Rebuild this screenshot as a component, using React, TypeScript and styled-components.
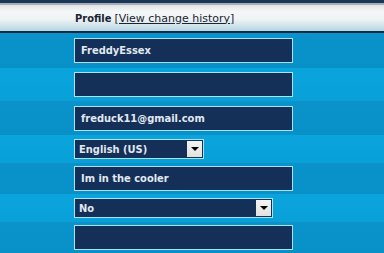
import React from "react";
import styled, { createGlobalStyle } from "styled-components";

const Global = createGlobalStyle`
  html, body { margin: 0; padding: 0; background: #0899d0; }
  body { font-family: Tahoma, "DejaVu Sans Condensed", "Liberation Sans", sans-serif; }
`;

const Page = styled.div`
  width: 384px;
  height: 253px;
  overflow: hidden;
  display: flex;
  flex-direction: column;
`;

const TopBand = styled.div`
  height: 3px;
  background: #18365a;
  flex: none;
`;

const Header = styled.div`
  height: 26px;
  flex: none;
  border-top: 2px solid #a7adb3;
  border-bottom: 2px solid #0e2c48;
  background: linear-gradient(to bottom, #dfe4e7 0%, #f4f7f8 25%, #eef3f4 55%, #c9e0e8 85%, #b6d6e1 100%);
  display: flex;
  align-items: center;
  padding-left: 75px;
  font-size: 11px;
  color: #1b2430;
`;

const Title = styled.span`
  font-weight: bold;
  margin-right: 3px;
`;

const HistoryLink = styled.a`
  font-family: "DejaVu Sans", Verdana, sans-serif;
  font-size: 11px;
  color: #1b2430;
  text-decoration: underline;
`;

const Row = styled.div<{ $h: number; $dark: boolean }>`
  height: ${(p) => p.$h}px;
  flex: none;
  display: flex;
  align-items: center;
  padding-left: 74px;
  background: ${(p) =>
    p.$dark
      ? "linear-gradient(to bottom, #0a92ca 0%, #0891c9 100%)"
      : "linear-gradient(to bottom, #0aa4dc 0%, #09a0d8 100%)"};
`;

const TextBox = styled.div`
  box-sizing: border-box;
  width: 219px;
  height: 25px;
  border: 1px solid #a9e4f6;
  background: #142f58;
  color: #e0e9f1;
  font-size: 11px;
  font-weight: bold;
  display: flex;
  align-items: center;
  padding-left: 6px;
`;

const Select = styled.div<{ $w: number }>`
  box-sizing: border-box;
  width: ${(p) => p.$w}px;
  height: 20px;
  border: 1px solid #a9e4f6;
  background: #142f58;
  color: #e0e9f1;
  font-size: 11px;
  font-weight: bold;
  display: flex;
  align-items: center;
  justify-content: space-between;
  padding-left: 4px;
  padding-right: 1px;
`;

const DropButton = styled.div`
  width: 15px;
  height: 16px;
  background: linear-gradient(to bottom, #f4f4f2 0%, #e2e2de 100%);
  display: flex;
  align-items: center;
  justify-content: center;
`;

const Arrow = styled.div`
  width: 0;
  height: 0;
  border-left: 4px solid transparent;
  border-right: 4px solid transparent;
  border-top: 4px solid #000;
`;

export default function App() {
  return (
    <>
      <Global />
      <Page>
        <TopBand />
        <Header>
          <Title>Profile</Title>
          <HistoryLink>[View change history]</HistoryLink>
        </Header>
        <Row $h={35} $dark={true}>
          <TextBox>FreddyEssex</TextBox>
        </Row>
        <Row $h={33} $dark={false}>
          <TextBox />
        </Row>
        <Row $h={34} $dark={true}>
          <TextBox>freduck11@gmail.com</TextBox>
        </Row>
        <Row $h={28} $dark={false}>
          <Select $w={130}>
            English (US)
            <DropButton>
              <Arrow />
            </DropButton>
          </Select>
        </Row>
        <Row $h={31} $dark={true}>
          <TextBox>Im in the cooler</TextBox>
        </Row>
        <Row $h={28} $dark={false}>
          <Select $w={199}>
            No
            <DropButton>
              <Arrow />
            </DropButton>
          </Select>
        </Row>
        <Row $h={31} $dark={true}>
          <TextBox />
        </Row>
      </Page>
    </>
  );
}
